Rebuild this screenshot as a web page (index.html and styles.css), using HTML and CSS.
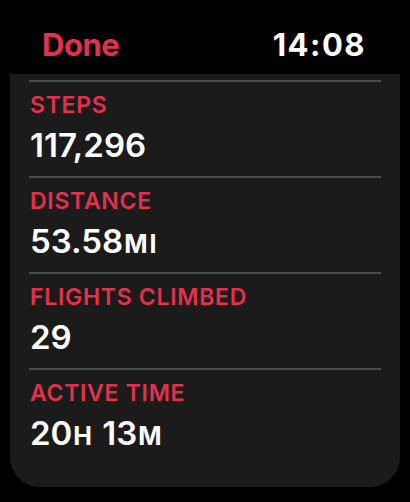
FILE: index.html
```html
<!DOCTYPE html>
<html lang="en">
<head>
    <meta charset="UTF-8">
    <meta name="viewport" content="width=device-width, initial-scale=1.0">
    <title>Workout Summary</title>
    <link rel="stylesheet" href="styles.css">
</head>
<body>
    <div class="watch">
        <div class="top-bar">
            <span class="done">Done</span>
            <span class="clock">14:08</span>
        </div>
        <div class="card">
            <div class="stat">
                <div class="stat-label">STEPS</div>
                <div class="stat-value">117,296</div>
            </div>
            <div class="stat">
                <div class="stat-label">DISTANCE</div>
                <div class="stat-value">53.58<span class="unit">MI</span></div>
            </div>
            <div class="stat">
                <div class="stat-label">FLIGHTS CLIMBED</div>
                <div class="stat-value">29</div>
            </div>
            <div class="stat last">
                <div class="stat-label">ACTIVE TIME</div>
                <div class="stat-value">20<span class="unit">H</span> 13<span class="unit">M</span></div>
            </div>
        </div>
    </div>
</body>
</html>
```

FILE: styles.css
```css
body {
    margin: 0;
    padding: 0;
    background-color: #000000;
    font-family: Inter, 'Noto Sans', sans-serif;
    color: #ffffff;
}
.watch {
    width: 410px;
    height: 502px;
    overflow: hidden;
}
.top-bar {
    height: 74px;
    display: flex;
    justify-content: space-between;
    align-items: center;
    padding: 14px 44px 0 42px;
    box-sizing: border-box;
}
.done {
    color: #e3304f;
    font-size: 31px;
    font-weight: 700;
    letter-spacing: -0.5px;
}
.clock {
    color: #ffffff;
    font-size: 31px;
    font-weight: 700;
    letter-spacing: 1.5px;
}
.card {
    margin: 0 10px;
    background-color: #1b1b1b;
    border-radius: 0 0 30px 30px;
    padding: 6px 19px 0 19px;
    height: 413px;
    box-sizing: border-box;
}
.stat {
    border-top: 2px solid #4b4b4b;
    height: 96px;
    box-sizing: border-box;
    padding-top: 9px;
}
.stat.last {
    height: 119px;
}
.stat-label {
    color: #e3304f;
    font-size: 23px;
    font-weight: 600;
    line-height: 28px;
    letter-spacing: 0.7px;
    padding-left: 1px;
}
.stat-value {
    font-size: 33px;
    font-weight: 600;
    line-height: 40px;
    margin-top: 6px;
    padding-left: 1px;
}
.unit {
    font-size: 25px;
    font-weight: 700;
    letter-spacing: 2px;
    margin-left: 1px;
}
```
